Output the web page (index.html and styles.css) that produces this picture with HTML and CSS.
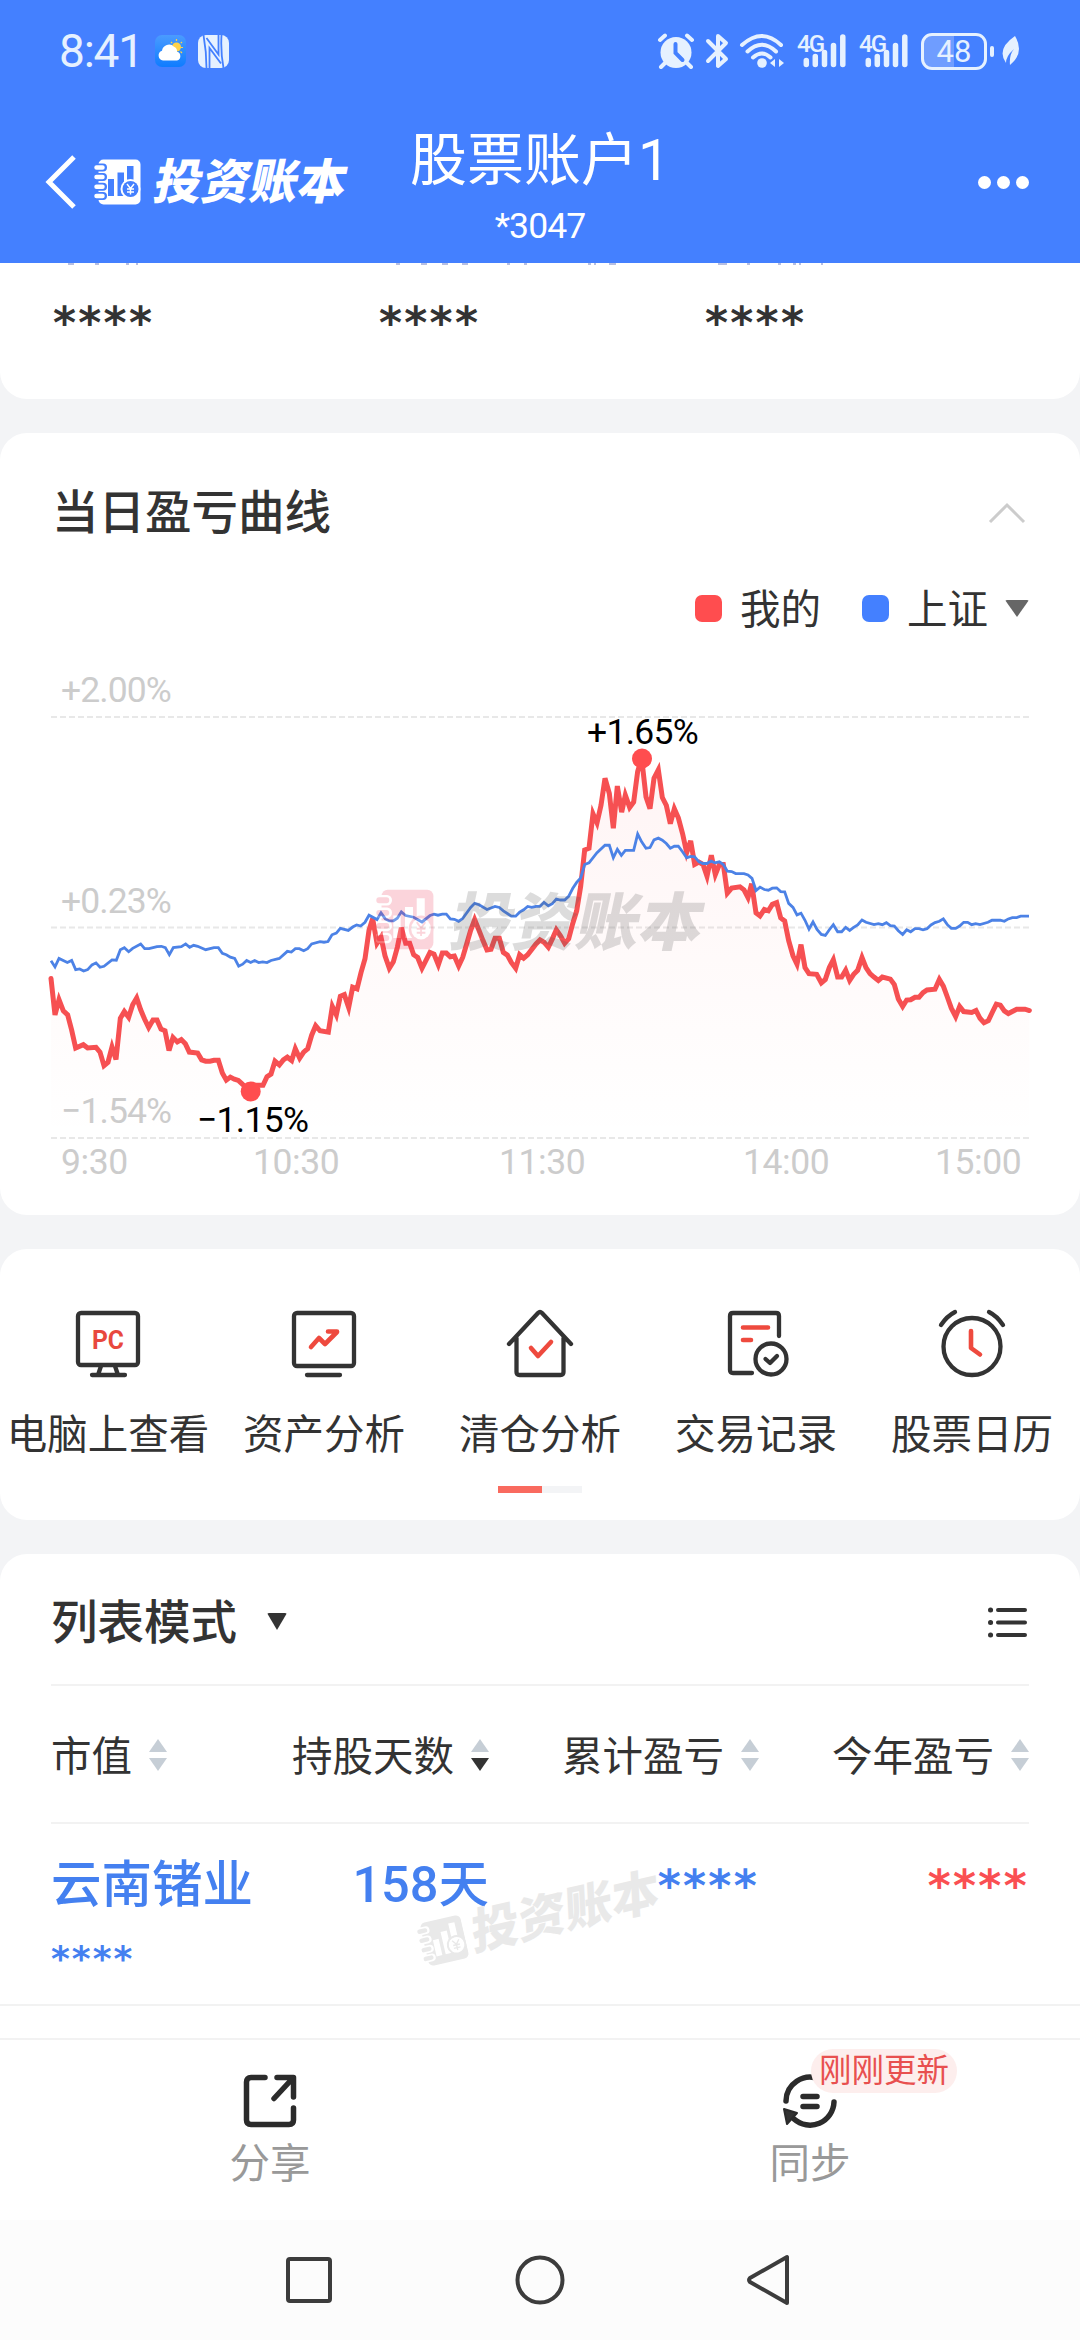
FILE: index.html
```html
<!DOCTYPE html>
<html lang="zh-CN">
<head>
    <meta charset="UTF-8">
    <meta name="viewport" content="width=device-width, initial-scale=1.0">
    <title>股票账户1</title>
    <link rel="stylesheet" href="styles.css">
</head>
<body>
    <svg class="defs" width="0" height="0">
        <symbol id="logo" viewBox="0 0 47 46">
            <rect x="4.5" y="0.5" width="42" height="45" rx="5" fill="currentColor"/>
            <g class="logo-cut">
                <path d="M14 20h6v17h-6zM23.5 13.5h6.5V37h-6.5zM33 7h6.5v22H33z"/>
                <path d="M3 8.5h6M3 18h6M3 27.8h6M3 37h6" class="ring-edge"/>
            </g>
            <path d="M2.5 8.5h6M2.5 18h6M2.5 27.8h6M2.5 37h6" class="ring"/>
            <circle cx="36.5" cy="30" r="10" fill="currentColor"/>
            <circle cx="36.5" cy="30" r="8" class="logo-cut"/>
            <path d="M33 25l3.5 4.500 3.500-4.500M36.500 29.500v6M33 30h7M33 33h7" class="yen"/>
        </symbol>
    </svg>

    <header class="header">
        <div class="status">
            <span class="time">8:41</span>
            <svg class="weather" width="31" height="32" viewBox="0 0 31 32">
                <rect width="31" height="32" rx="7" fill="url(#sky)"/>
                <defs>
                    <linearGradient id="sky" x1="0" y1="0" x2="0" y2="1"><stop offset="0" stop-color="#4a9bff"/><stop offset="1" stop-color="#0f7cff"/></linearGradient>
                </defs>
                <circle cx="21.5" cy="12" r="4.5" fill="#ffd24a"/>
                <path d="M21.5 4v2M16 7l1.2 1.2M27 7l-1.2 1.2M28 12.5h-2M27 18l-1.5-1.5" stroke="#ffd24a" stroke-width="1.2"/>
                <path d="M8 25.5a5 5 0 0 1-1-9.700 7 7 0 0 1 12-4 5 5 0 0 1 3 5 4.500 4.500 0 0 1 0 8.700z" fill="#fff"/>
            </svg>
            <svg class="nfc" width="31" height="33" viewBox="0 0 31 33">
                <rect width="31" height="33" rx="8" fill="#e6f1ff"/>
                <path d="M5.500 0Q8.500 17 8.500 33M11.500 33V13L23 28.500M20.500 0v19.500L8.500 3M23.500 0Q22.500 17 25.500 33" fill="none" stroke="#4480ff" stroke-width="1.800"/>
            </svg>
            <div class="status-right">
                <svg width="38" height="36" viewBox="0 0 38 36">
                    <circle cx="19" cy="19.5" r="15.5" fill="#e6f1ff"/>
                    <path d="M3 7l5-4.5M35 7l-5-4.5M8 30l-4 4M30 30l4 4" stroke="#e6f1ff" stroke-width="4" stroke-linecap="round"/>
                    <path d="M18.5 11v9l7 7" stroke="#4480ff" stroke-width="4" fill="none" stroke-linecap="round"/>
                </svg>
                <svg class="bt" width="24" height="36" viewBox="0 0 24 36">
                    <path d="M3 8l18 18-8 7V3l8 7L3 28" fill="none" stroke="#e6f1ff" stroke-width="4" stroke-linejoin="round" stroke-linecap="round"/>
                </svg>
                <svg class="wifi" width="46" height="36" viewBox="0 0 46 36">
                    <g fill="none" stroke="#e6f1ff" stroke-width="4" stroke-linecap="round">
                        <path d="M3 12Q23-6 42 12M8.5 18.5Q23 5 37 18.5M14 24.5q9-8 17.5 0"/>
                    </g>
                    <circle cx="23" cy="30" r="4.8" fill="#e6f1ff"/>
                    <path d="M31 30l5-4v8zM45 30l-5-4v8z" fill="#e6f1ff"/>
                </svg>
                <svg class="signal" width="51" height="36" viewBox="0 0 51 36">
                    <text x="1" y="19" class="net">4G</text>
                    <path d="M10.3 27.5v4M19.3 23.5v8M28.5 19.5v12M37.5 12.5v19M46.800 4v27.500"/>
                </svg>
                <svg class="signal" width="51" height="36" viewBox="0 0 51 36">
                    <text x="1" y="19" class="net">4G</text>
                    <path d="M10.3 27.5v4M19.3 23.5v8M28.5 19.5v12M37.5 12.5v19M46.800 4v27.500"/>
                </svg>
                <div class="battery"><span>48</span></div>
                <svg class="leaf" width="18" height="30" viewBox="0 0 18 30">
                    <path d="M13 0q10 17-5 29-1-10 4-16Q4 20 4 27-6 13 13 0z" fill="#e6f1ff"/>
                </svg>
            </div>
        </div>
        <div class="nav">
            <svg class="back" width="32" height="54" viewBox="0 0 32 54"><path d="M29 2L4 27l25 25" fill="none" stroke="#fff" stroke-width="5"/></svg>
            <svg class="brand-logo" width="47" height="46"><use href="#logo"/></svg>
            <span class="brand">投资账本</span>
            <div class="title">
                <div class="account">股票账户1</div>
                <div class="number">*3047</div>
            </div>
            <div class="more"><i></i><i></i><i></i></div>
        </div>
    </header>

    <main class="main">
        <section class="card card-summary">
            <svg class="cut-labels" width="1080" height="2" viewBox="0 0 1080 2">
                <path d="M68 1h6M95 1h4M126 1h3M136 1h2M396 1h4M421 1h6M442 1h6M462 1h6M507 1h3M524 1h3M588 1h3M594 1h2M609 1h7M718 1h9M747 1h3M778 1h3M793 1h3M799 1h2M821 1h2"/>
            </svg>
            <div class="summary">
                <span>****</span><span>****</span><span>****</span>
            </div>
        </section>

        <section class="card card-chart">
            <div class="card-head">
                <h2>当日盈亏曲线</h2>
                <svg width="38" height="22" viewBox="0 0 38 22"><path d="M2 20L19 3l17 17" fill="none" stroke="#ccc" stroke-width="3"/></svg>
            </div>
            <div class="legend">
                <i class="mine"></i><span>我的</span>
                <i class="index"></i><span>上证</span>
                <b class="caret"></b>
            </div>
            <div class="chart">
                <svg width="1080" height="530" viewBox="0 0 1080 530">
                    <defs>
                        <linearGradient id="fill" x1="0" y1="0" x2="0" y2="1">
                            <stop offset="0" stop-color="#ff4d4f" stop-opacity="0.06"/>
                            <stop offset="1" stop-color="#ff4d4f" stop-opacity="0"/>
                        </linearGradient>
                    </defs>
                    <g class="grid">
                        <path d="M51 57h978M51 267.5h978M51 478h978"/>
                    </g>
                    <g class="axis">
                        <text x="61" y="42">+2.00%</text>
                        <text x="61" y="253">+0.23%</text>
                        <text x="61" y="463">−1.54%</text>
                        <g class="hours">
                            <text x="61" y="514">9:30</text>
                            <text x="253" y="514">10:30</text>
                            <text x="499" y="514">11:30</text>
                            <text x="743" y="514">14:00</text>
                            <text x="935" y="514">15:00</text>
                        </g>
                    </g>
                    <svg id="plot" width="1080" height="530" viewBox="0 0 3240 1568" preserveAspectRatio="none">
                        <polygon id="area" fill="url(#fill)"/>
                        <polyline id="mine" class="line-mine"/>
                        <polyline id="index" class="line-index"/>
                    </svg>
                    <circle cx="250.7" cy="431.5" r="10" fill="#ff4d4f"/>
                    <circle cx="642" cy="98.5" r="10" fill="#ff4d4f"/>
                    <g class="peak">
                        <text x="197" y="472">−1.15%</text>
                        <text x="587" y="84">+1.65%</text>
                    </g>
                </svg>
                <div class="mark">
                    <svg width="58" height="61" viewBox="0 0 47 46" preserveAspectRatio="none"><use href="#logo"/></svg>
                    <span>投资账本</span>
                </div>
            </div>
        </section>

        <section class="card card-tools">
            <div class="tools">
                <div class="tool">
                    <svg width="72" height="72" viewBox="0 0 72 72">
                        <rect x="6" y="6" width="60" height="52" rx="3"/>
                        <path d="M29 59l-3 9M43 59l3 9M20 68h33"/>
                        <text x="36" y="42" text-anchor="middle" textLength="32" lengthAdjust="spacingAndGlyphs" class="pc">PC</text>
                    </svg>
                    <span>电脑上查看</span>
                </div>
                <div class="tool">
                    <svg width="72" height="72" viewBox="0 0 72 72">
                        <rect x="6" y="6" width="60" height="53" rx="3"/>
                        <path d="M19 68h33"/>
                        <path class="red" d="M23 40l8-9 6 6 12-12M40 24.5h9"/>
                    </svg>
                    <span>资产分析</span>
                </div>
                <div class="tool">
                    <svg width="72" height="72" viewBox="0 0 72 72">
                        <path d="M5 37L34 6q2-2 4 0l29 31M12.5 31v34q0 3 3 3h41q3 0 3-3V31"/>
                        <path class="red" d="M27 41l7 8 13-14"/>
                    </svg>
                    <span>清仓分析</span>
                </div>
                <div class="tool">
                    <svg width="72" height="72" viewBox="-3 0 72 72">
                        <path d="M56 29V9q0-3-3-3H10q-3 0-3 3v54q0 3 3 3h19"/>
                        <path class="red" d="M20 20.5h25M20 33h8"/>
                        <circle cx="48" cy="52" r="15.5"/>
                        <path d="M42.5 52l4.5 4 7-7"/>
                    </svg>
                    <span>交易记录</span>
                </div>
                <div class="tool">
                    <svg width="72" height="72" viewBox="0 0 72 72">
                        <circle cx="36" cy="39.5" r="28.5"/>
                        <path d="M5 18Q11 9 19 5M67 18Q61 9 53 5"/>
                        <path class="red" d="M35 24v17l9 6.5"/>
                    </svg>
                    <span>股票日历</span>
                </div>
            </div>
            <div class="pager"><i></i></div>
        </section>

        <section class="card card-list">
            <div class="list-head">
                <h2>列表模式</h2>
                <b class="caret"></b>
                <svg width="40" height="32" viewBox="0 0 40 32">
                    <path d="M11 4h27M11 16.5h27M11 29h27" stroke="#333" stroke-width="4" stroke-linecap="round"/>
                    <path d="M3.5 4h.1M3.5 16.5h.1M3.5 29h.1" stroke="#333" stroke-width="5" stroke-linecap="round"/>
                </svg>
            </div>
            <div class="row row-head">
                <div>市值<i class="sort"></i></div>
                <div>持股天数<i class="sort down"></i></div>
                <div>累计盈亏<i class="sort"></i></div>
                <div>今年盈亏<i class="sort"></i></div>
            </div>
            <div class="row row-stock">
                <div class="name">云南锗业<span class="stars small">****</span></div>
                <div class="days">158天</div>
                <div class="stars">****</div>
                <div class="stars up">****</div>
                <div class="row-mark">
                    <svg width="46" height="46"><use href="#logo"/></svg>
                    <span>投资账本</span>
                </div>
            </div>
        </section>
    </main>

    <footer class="tabs">
        <div class="tab">
            <svg width="56" height="56" viewBox="0 0 56 56">
                <path d="M23 4.5H9Q4.5 4.5 4.5 9v38q0 4.5 4.5 4.5h38q4.5 0 4.5-4.5V35M35 4.5h16.5V24M51 5L32 25.5"/>
            </svg>
            <span>分享</span>
        </div>
        <div class="tab">
            <svg width="56" height="56" viewBox="0 0 56 56">
                <path d="M4 28A24 24 0 0 1 37 6M52 29A24 24 0 0 1 12 46M21 23.5h14M21 33.5h14"/>
                <path d="M2 36l13 4-10 11z" class="head"/>
            </svg>
            <span>同步</span>
            <em class="badge">刚刚更新</em>
        </div>
    </footer>

    <div class="sysnav">
        <svg width="50" height="54" viewBox="0 0 50 54"><rect x="4" y="6" width="42" height="42" rx="2"/></svg>
        <svg width="50" height="54" viewBox="0 0 50 54"><circle cx="25" cy="27" r="22.5"/></svg>
        <svg width="50" height="54" viewBox="0 0 50 54"><path d="M42 4v46L5 29q-2-2 0-4z"/></svg>
    </div>

    <script>
        const mine = '153,942 165,1050 177,1005 190,1038 203,1050 215,1095 227,1148 250,1138 263,1148 288,1146 300,1160 312,1200 324,1190 336,1145 348,1182 361,1060 373,1040 386,1057 398,1020 410,1000 422,1035 434,1063 446,1087 459,1065 471,1065 483,1092 495,1097 507,1155 519,1117 532,1130 544,1123 556,1135 568,1160 593,1163 605,1183 617,1187 630,1187 642,1184 655,1184 667,1222 679,1243 691,1234 703,1240 715,1244 727,1255 752,1276 765,1258 789,1258 801,1233 813,1225 825,1187 838,1198 850,1183 862,1175 875,1185 886,1150 899,1178 911,1160 923,1150 935,1110 947,1082 960,1097 985,1101 997,1025 1009,1050 1021,995 1033,990 1046,1028 1058,968 1071,973 1083,925 1095,884 1107,800 1118,765 '
            + '1131,838 1143,820 1155,875 1168,912 1180,893 1192,850 1204,792 1217,838 1229,838 1241,872 1253,880 1266,912 1290,865 1302,870 1315,902 1327,867 1339,867 1351,878 1363,876 1376,905 1388,880 1400,840 1412,800 1424,768 1437,800 1449,830 1461,858 1473,856 1485,823 1498,823 1510,865 1522,873 1534,895 1547,912 1559,872 1571,882 1583,872 1608,840 1620,828 1632,835 1645,850 1657,825 1669,798 1681,815 1694,838 1706,825 1718,780 1730,742 1742,670 1754,562 1767,557 1779,455 1791,482 1803,430 1815,350 1828,395 1840,498 1852,373 1865,450 1876,400 1889,436 1901,420 1913,330 1925,291 1938,405 1950,440 1962,350 1975,325 1987,407 1999,430 2011,484 2023,440 2035,467 2048,515 2060,570 2072,535 2084,605 2097,598 2109,605 '
            + '2121,640 2134,578 2146,635 2158,605 2170,605 2182,690 2195,675 2220,671 2232,680 2244,703 2255,662 2268,748 2280,757 2293,738 2305,742 2317,723 2330,718 2342,763 2354,772 2366,830 2379,875 2391,900 2403,842 2415,910 2427,928 2450,930 2464,955 2476,945 2488,910 2500,887 2513,938 2525,938 2537,918 2549,948 2561,930 2573,918 2586,880 2598,910 2610,928 2622,938 2635,948 2647,938 2671,944 2683,960 2695,1003 2708,1025 2720,1006 2732,1005 2745,998 2757,998 2769,984 2781,976 2805,974 2818,945 2830,965 2842,997 2854,1030 2867,1055 2879,1025 2891,1040 2915,1043 2928,1037 2940,1060 2952,1073 2965,1067 2977,1042 2989,1018 3001,1021 3013,1038 3025,1046 3050,1033 3075,1033 3088,1037';
        const index = '153,890 165,908 177,883 202,895 215,889 227,916 239,914 251,920 263,916 276,902 288,896 300,909 312,906 336,887 349,888 361,857 373,851 386,863 398,853 422,840 434,854 447,854 471,848 484,847 496,851 508,872 520,851 544,848 557,840 569,850 581,844 593,847 617,857 642,851 655,851 667,868 679,872 691,879 704,883 716,906 728,900 740,889 752,895 764,889 776,895 788,893 801,895 813,889 838,883 862,862 874,864 886,854 898,854 911,860 923,854 935,840 960,833 972,835 984,833 996,813 1009,808 1021,794 1045,800 1058,790 1070,784 1082,787 1095,776 1107,755 1131,768 1143,748 1156,766 1168,772 1180,772 1192,764 '
            + '1204,745 1217,756 1241,761 1266,775 1290,756 1302,752 1314,755 1327,752 1339,752 1351,766 1363,767 1376,773 1388,765 1412,732 1424,720 1437,724 1461,738 1485,729 1498,732 1510,742 1534,758 1547,758 1559,746 1571,739 1583,729 1595,732 1608,729 1620,729 1632,717 1645,727 1657,721 1669,707 1681,710 1694,710 1706,699 1718,676 1730,658 1742,645 1754,605 1767,600 1791,570 1815,548 1828,548 1840,585 1852,560 1864,578 1876,563 1901,563 1913,515 1925,538 1938,557 1950,555 1962,532 1975,527 1987,533 1999,543 2011,557 2023,551 2035,551 2048,568 2060,585 2072,581 2084,582 2097,597 2109,602 2121,602 2133,595 2145,600 2158,597 2170,605 2182,625 2195,626 '
            + '2207,632 2232,632 2244,636 2256,646 2268,682 2280,672 2293,679 2305,681 2317,675 2330,674 2342,685 2354,686 2366,720 2379,732 2391,754 2403,749 2415,770 2427,796 2439,775 2451,797 2464,812 2476,815 2488,798 2500,783 2513,804 2525,804 2537,791 2549,800 2561,791 2573,784 2586,769 2598,776 2622,783 2635,780 2647,783 2659,777 2671,786 2683,787 2695,801 2708,812 2720,798 2732,804 2745,795 2757,795 2769,798 2781,795 2793,784 2805,777 2818,773 2830,766 2842,783 2854,794 2867,794 2879,787 2891,776 2903,776 2915,783 2927,780 2940,783 2964,776 2976,770 3001,770 3013,773 3025,766 3037,762 3050,762 3062,758 3087,758';
        document.getElementById('mine').setAttribute('points', mine);
        document.getElementById('index').setAttribute('points', index);
        document.getElementById('area').setAttribute('points', mine + ' 3088,1414 153,1414');
    </script>
</body>
</html>
```
FILE: styles.css
```css
* {
    box-sizing: border-box;
}
body {
    margin: 0;
    width: 1080px;
    height: 2340px;
    overflow: hidden;
    display: flex;
    flex-direction: column;
    background: #f3f4f6;
    color: #333;
    font-family: Roboto, 'Noto Sans CJK SC', sans-serif;
    font-size: 40.5px;
}
svg {
    display: block;
    flex: none;
}
.defs {
    position: absolute;
}
h2 {
    margin: 0;
    font-size: 46.5px;
    font-weight: 500;
    line-height: 60px;
}

/* logo */
.logo-cut {
    fill: var(--cut, #4480ff);
}
.ring-edge {
    stroke: var(--cut, #4480ff);
    stroke-width: 8;
    stroke-linecap: round;
}
.ring {
    stroke: currentColor;
    stroke-width: 4.5;
    stroke-linecap: round;
}
.yen {
    fill: none;
    stroke: currentColor;
    stroke-width: 1.4;
}

/* header */
.header {
    flex: none;
    height: 263px;
    background: #4480ff;
    color: #fff;
}
.status {
    display: flex;
    align-items: center;
    height: 102px;
    padding: 0 60px 0 59px;
    color: #e6f1ff;
}
.time {
    width: 96px;
    font-size: 46px;
    line-height: 50px;
    letter-spacing: -1.2px;
}
.nfc {
    margin-left: 12px;
}
.status-right {
    display: flex;
    align-items: center;
    margin-left: auto;
}
.bt {
    margin-left: 10px;
}
.wifi {
    margin-left: 10px;
}
.signal {
    margin-left: 11px;
    overflow: visible;
    fill: none;
    stroke: #e6f1ff;
    stroke-width: 5.5;
    stroke-linecap: round;
}
.net {
    font-size: 24px;
    letter-spacing: -2px;
    font-weight: 500;
    fill: #e6f1ff;
    stroke: none;
}
.battery {
    position: relative;
    width: 66px;
    height: 37px;
    margin: 0 15px 0 12px;
    border: 3px solid #e6f1ff;
    border-radius: 11px;
    background: linear-gradient(to right, #6f9dff 50%, transparent 50%);
    text-align: center;
    font-size: 31px;
    line-height: 32px;
}
.battery::after {
    content: '';
    position: absolute;
    left: 66px;
    top: 10px;
    width: 4px;
    height: 11px;
    border-radius: 2px;
    background: #e6f1ff;
}
.nav {
    position: relative;
    display: flex;
    align-items: center;
    height: 161px;
    padding: 0 51px 0 45px;
}
.back, .brand-logo, .brand, .more {
    margin-top: -1px;
}
.brand-logo {
    margin-left: 17px;
}
.brand {
    margin-left: 14px;
    font-size: 48px;
    font-weight: 900;
    line-height: 60px;
    transform: translateY(1px) skewX(-12deg);
}
.title {
    position: absolute;
    left: 0;
    right: 0;
    top: 21px;
    text-align: center;
    pointer-events: none;
}
.account {
    font-size: 57px;
    line-height: 76px;
}
.number {
    font-size: 35.5px;
    line-height: 54px;
    letter-spacing: -0.9px;
}
.more {
    display: flex;
    gap: 6px;
    margin-left: auto;
}
.more i {
    width: 13px;
    height: 13px;
    border-radius: 50%;
    background: #fff;
}

/* cards */
.main {
    flex: none;
    height: 1775px;
    overflow: hidden;
    display: flex;
    flex-direction: column;
    gap: 34px;
}
.card {
    flex: none;
    background: #fff;
    border-radius: 27px;
}
.card-summary {
    height: 136px;
    border-radius: 0 0 27px 27px;
}
.cut-labels {
    stroke: #6f7fc4;
    stroke-width: 1;
}
.summary {
    display: flex;
    padding: 28px 0 0 53px;
    font: 700 44px/60px 'DejaVu Sans', sans-serif;
    letter-spacing: 2.3px;
}
.summary span {
    width: 326px;
}
.card-chart {
    height: 782px;
}
.card-head {
    display: flex;
    align-items: center;
    justify-content: space-between;
    height: 158px;
    padding: 2px 54px 0 52px;
}
.legend {
    display: flex;
    align-items: center;
    justify-content: flex-end;
    height: 34px;
    padding-right: 51px;
    font-size: 40.5px;
}
.legend span {
    margin-top: -4px;
}
.legend i {
    width: 27px;
    height: 27px;
    margin-right: 18px;
    border-radius: 7px;
    background: #ff4d4f;
}
.legend .index {
    margin-left: 41px;
    background: #4480ff;
}
.legend .caret {
    margin-left: 17px;
    border-width: 17px 12.5px 0;
    border-top-color: #666;
}
.caret {
    border: solid transparent;
    border-width: 17px 10px 0;
    border-top-color: #333;
    border-radius: 2px;
}
.chart {
    position: relative;
    height: 530px;
    margin-top: 35px;
}
.grid path {
    stroke: #e8e8e8;
    stroke-width: 2;
    stroke-dasharray: 6 3;
}
.axis text {
    font-size: 35.5px;
    fill: #ccc;
    letter-spacing: -0.9px;
}
.axis .hours text {
    letter-spacing: -0.4px;
}
.peak text {
    font-size: 35.5px;
    fill: #000;
    letter-spacing: -0.7px;
}
.line-mine, .line-index {
    fill: none;
    vector-effect: non-scaling-stroke;
}
.line-mine {
    stroke: #f65052;
    stroke-width: 5;
    stroke-linecap: round;
}
.line-index {
    stroke: #4c82e6;
    stroke-width: 2.8;
}
.mark {
    position: absolute;
    left: 376px;
    top: 229px;
    display: flex;
    align-items: center;
    height: 61px;
    opacity: 0.2;
}
.mark svg {
    color: #f0304f;
    --cut: #fff;
}
.mark span {
    margin-left: 18px;
    font-size: 63px;
    font-weight: 900;
    line-height: 61px;
    color: #555;
    transform: translateY(4px) skewX(-12deg);
}

/* tools */
.card-tools {
    height: 271px;
    padding-top: 58px;
}
.tools {
    display: flex;
}
.tool {
    width: 216px;
    display: flex;
    flex-direction: column;
    align-items: center;
    white-space: nowrap;
    line-height: 60px;
}
.tool svg {
    margin-bottom: 26px;
    fill: none;
    stroke: #333;
    stroke-width: 4.3;
    stroke-linecap: round;
    stroke-linejoin: round;
}
.tool .red {
    stroke: #ee4a3e;
    stroke-width: 4.6;
}
.tool .pc {
    font-size: 25px;
    font-weight: 700;
    fill: #e8483e;
    stroke: none;
}
.pager {
    width: 84px;
    height: 7px;
    margin: 21px auto 0;
    background: #f3f4f6;
}
.pager i {
    display: block;
    width: 44px;
    height: 7px;
    background: #f96a5f;
}

/* list */
.card-list {
    height: 520px;
}
.list-head {
    display: flex;
    align-items: center;
    height: 132px;
    margin: 0 51px;
    padding-top: 7px;
    border-bottom: 2px solid #f2f2f2;
}
.list-head .caret {
    margin: -2px 0 0 30px;
}
.list-head svg {
    margin: -2px 2px 0 auto;
}
.row {
    position: relative;
    display: flex;
    justify-content: space-between;
    padding: 0 51px;
}
.row div {
    text-align: right;
}
.row-head {
    height: 138px;
    padding-bottom: 3px;
}
.row-head::after {
    content: '';
    position: absolute;
    left: 51px;
    right: 51px;
    bottom: 0;
    height: 2px;
    background: #f2f2f2;
}
.row-head div {
    display: flex;
    align-items: center;
    justify-content: flex-end;
    width: 270px;
}
.row-head div:first-child {
    width: 168px;
    justify-content: flex-start;
    margin-right: auto;
}
.sort {
    display: flex;
    flex-direction: column;
    gap: 6px;
    margin: 2px 0 0 17px;
}
.sort::before, .sort::after {
    content: '';
    border: solid transparent;
    border-width: 0 9px 13px;
    border-bottom-color: #c6ced6;
}
.sort::after {
    border-width: 13px 9px 0;
    border-top-color: #c6ced6;
}
.sort.down::after {
    border-top-color: #333;
}
.row-stock {
    height: 182px;
    border-bottom: 2px solid #f2f2f2;
    color: #4480f0;
    font-size: 50.5px;
    font-weight: 500;
    line-height: 121px;
}
.row-stock > div {
    width: 270px;
}
.row-stock .name {
    width: 220px;
    margin-right: auto;
    text-align: left;
}
.days {
    margin-left: -52px;
}
.stars {
    font: 700 44px/123px 'DejaVu Sans', sans-serif;
    letter-spacing: 2.3px;
}
.stars.up {
    color: #fa4f52;
}
.stars.small {
    display: block;
    margin-top: -16px;
    font-size: 36px;
    line-height: 60px;
    letter-spacing: 2px;
}
.row-stock .row-mark {
    position: absolute;
    left: 417px;
    top: 64px;
    width: 250px;
    display: flex;
    align-items: center;
    height: 60px;
    color: #e9e9e9;
    --cut: #fff;
    transform: rotate(-13deg);
}
.row-mark span {
    margin-left: 7px;
    font-size: 48px;
    font-weight: 900;
    line-height: 60px;
    transform: skewX(-10deg);
}

/* bottom */
.tabs {
    flex: none;
    display: flex;
    height: 182px;
    border-top: 2px solid #f2f2f2;
    background: #fff;
}
.tab {
    position: relative;
    flex: 1;
    display: flex;
    flex-direction: column;
    align-items: center;
    padding-top: 33px;
    color: #999;
    line-height: 60px;
}
.tab svg {
    margin-bottom: 5px;
    fill: none;
    stroke: #2b2b2b;
    stroke-width: 5.5;
    stroke-linecap: round;
    stroke-linejoin: round;
}
.tab .head {
    fill: #333;
    stroke-width: 2;
}
.badge {
    position: absolute;
    left: 271px;
    top: 9px;
    padding: 1px 8px 0;
    border-radius: 22px;
    background: #fdeeed;
    color: #e8504f;
    font-size: 32.5px;
    font-style: normal;
    line-height: 43px;
}
.sysnav {
    flex: none;
    display: flex;
    justify-content: space-between;
    align-items: center;
    height: 120px;
    padding: 0 285px 0 284px;
    background: #fcfcfc;
}
.sysnav svg {
    fill: none;
    stroke: #3c3c3c;
    stroke-width: 4;
    stroke-linejoin: round;
}
```
